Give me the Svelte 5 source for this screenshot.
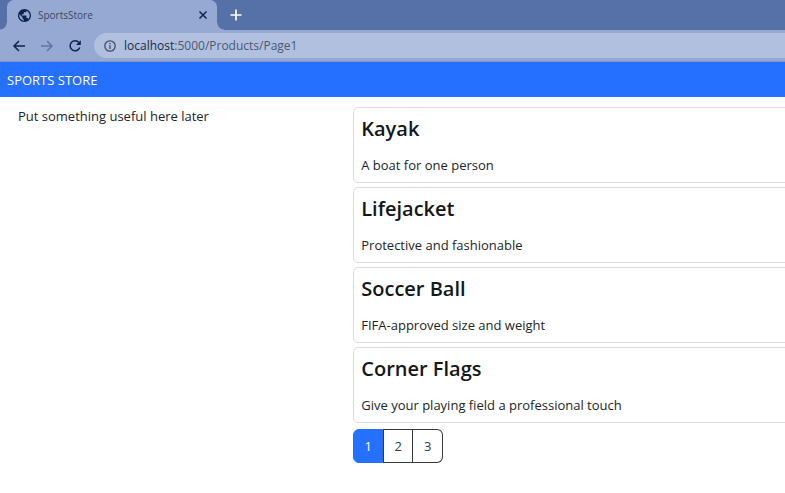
<script>
  const products = [
    { name: 'Kayak', description: 'A boat for one person' },
    { name: 'Lifejacket', description: 'Protective and fashionable' },
    { name: 'Soccer Ball', description: 'FIFA-approved size and weight' },
    { name: 'Corner Flags', description: 'Give your playing field a professional touch' }
  ];
  const pages = [1, 2, 3];
  let current = $state(1);
  let path = $state(':5000/Products/Page1');
</script>

<div class="window">
  <header class="tabs">
    <div class="tab">
      <svg class="globe" viewBox="2 2 20 20" width="13" height="13" aria-hidden="true">
        <path d="M12 2C6.480 2 2 6.480 2 12s4.480 10 10 10 10-4.480 10-10S17.520 2 12 2zm-1 17.930c-3.950-.49-7-3.850-7-7.930 0-.62.080-1.210.21-1.790L9 15v1c0 1.100.9 2 2 2v1.930zm6.900-2.540c-.26-.81-1-1.390-1.900-1.390h-1v-3c0-.55-.45-1-1-1H8v-2h2c.55 0 1-.45 1-1V7h2c1.100 0 2-.9 2-2v-.41c2.930 1.190 5 4.060 5 7.410 0 2.080-.8 3.970-2.100 5.390z" fill="#0d2350" />
      </svg>
      <span class="tab-title">SportsStore</span>
      <button class="icon" aria-label="Close tab">
        <svg viewBox="0 0 10 10" width="10" height="10"><path d="m1.500 1.500 7 7m0-7-7 7" stroke="#0d2350" stroke-width="1.500" /></svg>
      </button>
    </div>
    <button class="icon new-tab" aria-label="New tab">
      <svg viewBox="0 0 12 12" width="12" height="12"><path d="M6 .5v11M.5 6h11" stroke="#fff" stroke-width="1.700" /></svg>
    </button>
  </header>

  <div class="toolbar">
    <button class="icon" aria-label="Back">
      <svg viewBox="0 0 14 14" width="14" height="14"><path d="M13 7H2m5-5L2 7l5 5" fill="none" stroke="#0d2350" stroke-width="1.500" /></svg>
    </button>
    <button class="icon" aria-label="Forward">
      <svg viewBox="0 0 14 14" width="14" height="14"><path d="M1 7h11M7 2l5 5-5 5" fill="none" stroke="#5f76a9" stroke-width="1.500" /></svg>
    </button>
    <button class="icon" aria-label="Reload">
      <svg viewBox="0 0 14 14" width="14" height="14">
        <path d="M11 3.600A5 5 0 1 0 11.800 8.500" fill="none" stroke="#0d2350" stroke-width="1.500" />
        <path d="M12.800 1.200v4.800H8Z" fill="#0d2350" />
      </svg>
    </button>
    <label class="address">
      <svg viewBox="0 0 12 12" width="12" height="12" aria-hidden="true">
        <circle cx="6" cy="6" r="5.200" fill="none" stroke="#414c66" stroke-width="1.300" />
        <path d="M6 5.200V9M6 3v1.300" stroke="#414c66" stroke-width="1.300" />
      </svg>
      <span class="host">localhost</span>
      <input aria-label="Address" bind:value={path} spellcheck="false" />
    </label>
  </div>

  <nav class="brand-bar"><a href="#home">SPORTS STORE</a></nav>

  <main>
    <aside>Put something useful here later</aside>
    <section>
      {#each products as product}
        <article>
          <h4>{product.name}</h4>
          <p>{product.description}</p>
        </article>
      {/each}
      <nav class="pager" aria-label="Pages">
        {#each pages as page}
          <a href={'#page' + page} class:active={page === current} onclick={() => (current = page)}>{page}</a>
        {/each}
      </nav>
    </section>
  </main>
</div>

<style>
  :global(body) {
    margin: 0;
    background: #fff;
  }
  .window {
    overflow: hidden;
    font-family: "Segoe UI", "Open Sans", "Noto Sans", sans-serif;
    font-size: 13px;
    line-height: 20px;
    color: #212529;
  }
  .icon {
    display: flex;
    padding: 0;
    border: 0;
    background: none;
  }
  .tabs {
    display: flex;
    align-items: center;
    height: 30px;
    padding-left: 7px;
    background: #5571a7;
  }
  .tab {
    position: relative;
    display: flex;
    align-items: center;
    box-sizing: border-box;
    width: 210px;
    height: 30px;
    padding: 0 9px 0 11px;
    border-radius: 7px 7px 0 0;
    background: #96a9d3;
    font-size: 10px;
    color: #3a4867;
  }
  .tab::before,
  .tab::after {
    content: "";
    position: absolute;
    bottom: 0;
    width: 7px;
    height: 7px;
  }
  .tab::before {
    right: 100%;
    background: radial-gradient(circle at 0 0, transparent 6px, #96a9d3 7px);
  }
  .tab::after {
    left: 100%;
    background: radial-gradient(circle at 100% 0, transparent 6px, #96a9d3 7px);
  }
  .tab-title {
    flex: 1;
    margin-left: 7px;
  }
  .new-tab {
    margin-left: 13px;
  }
  .toolbar {
    display: flex;
    align-items: center;
    gap: 14px;
    box-sizing: border-box;
    height: 32px;
    padding-left: 12px;
    border-bottom: 1px solid #8497c4;
    background: #96a9d3;
  }
  .address {
    display: flex;
    flex: 1;
    align-items: center;
    height: 25px;
    margin-left: -2px;
    padding-left: 10px;
    border-radius: 13px 0 0 13px;
    background: #b1c0df;
    font-size: 12px;
  }
  .host {
    margin-left: 8px;
    color: #1e2a45;
  }
  input {
    flex: 1;
    min-width: 0;
    padding: 0;
    border: 0;
    outline: 0;
    background: none;
    font: inherit;
    color: #4b5874;
  }
  .brand-bar {
    padding: 8px 7px 7px;
    background: #2670ff;
  }
  .brand-bar a {
    color: #fff;
    text-decoration: none;
  }
  main {
    display: flex;
    padding-top: 10px;
  }
  aside {
    flex: 0 0 45%;
    box-sizing: border-box;
    padding-left: 18px;
    line-height: 18px;
  }
  section {
    flex: 1;
    margin-right: -12px;
  }
  article {
    margin-bottom: 4px;
    padding: 7px;
    border: 1px solid #dcdcde;
    border-radius: 5px;
  }
  h4 {
    margin: 0 0 12px;
    font-size: 20px;
    font-weight: 600;
    line-height: 28px;
    color: #14171a;
  }
  p {
    margin: 0;
  }
  .pager {
    display: flex;
    margin-top: 6px;
  }
  .pager a {
    box-sizing: border-box;
    width: 30px;
    padding: 6px 0;
    border: 1px solid #343a40;
    text-align: center;
    color: #343a40;
    text-decoration: none;
  }
  .pager a + a {
    border-left-width: 0;
  }
  .pager a:first-child {
    border-radius: 6px 0 0 6px;
  }
  .pager a:last-child {
    border-radius: 0 6px 6px 0;
  }
  .pager a.active {
    border-color: #2670ff;
    background: #2670ff;
    color: #fff;
  }
  .pager a.active + a {
    border-left-width: 1px;
  }
</style>
